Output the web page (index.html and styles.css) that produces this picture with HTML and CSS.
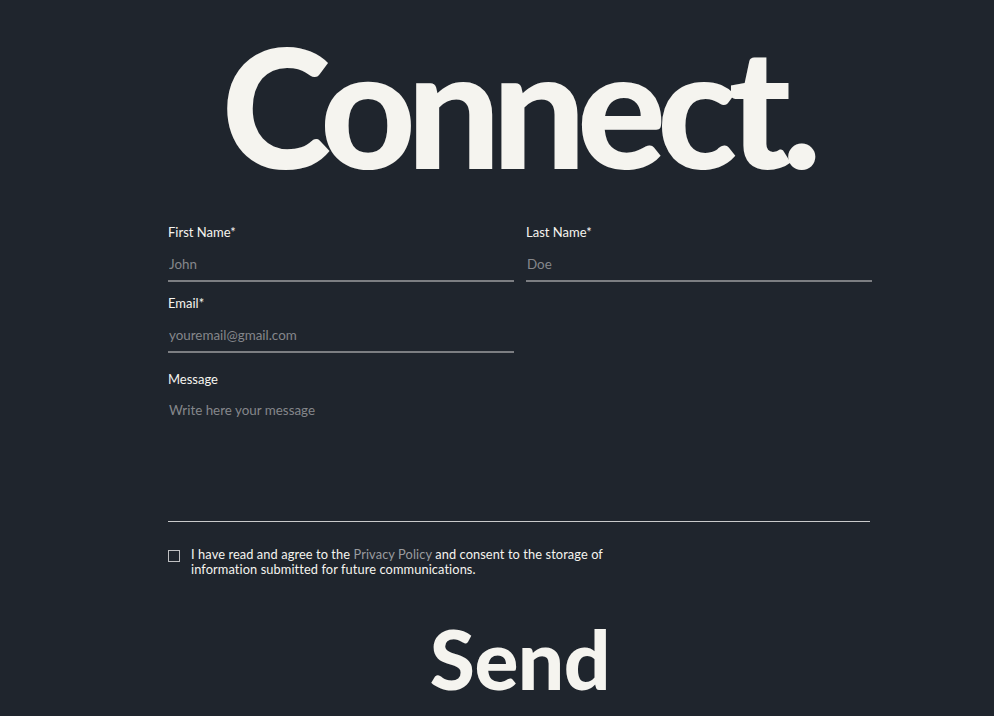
FILE: index.html
```html
<!DOCTYPE html>
<html lang="en">
<head>
<meta charset="utf-8">
<title>Connect</title>
<link rel="stylesheet" href="styles.css">
</head>
<body>
<main class="page">
  <h1 class="title">Connect.</h1>
  <form class="form">
    <div class="row">
      <label class="field">
        <span class="label">First Name*</span>
        <input class="input" type="text" placeholder="John">
      </label>
      <label class="field">
        <span class="label">Last Name*</span>
        <input class="input" type="text" placeholder="Doe">
      </label>
    </div>
    <div class="row">
      <label class="field">
        <span class="label">Email*</span>
        <input class="input" type="email" placeholder="youremail@gmail.com">
      </label>
      <div class="field"></div>
    </div>
    <label class="field message">
      <span class="label">Message</span>
      <textarea class="textarea" placeholder="Write here your message"></textarea>
    </label>
    <label class="consent">
      <span class="box"></span>
      <span class="consent-text">I have read and agree to the <span class="link">Privacy Policy</span> and consent to the storage of information submitted for future communications.</span>
    </label>
    <div class="send-wrap"><button class="send" type="button">Send</button></div>
  </form>
</main>
</body>
</html>
```
FILE: styles.css
```css
html, body {
  margin: 0;
  padding: 0;
  background: #1f252d;
  height: 100%;
  overflow: hidden;
}
body {
  font-family: "Lato", "Noto Sans", sans-serif;
  color: #f5f4ef;
}
.page {
  width: 704px;
  margin-left: 168px;
  padding-top: 17px;
}
.title {
  margin: 0;
  text-align: center;
  font-weight: 900;
  font-size: 166px;
  line-height: 175px;
  letter-spacing: -9px;
  text-indent: -6px;
  color: #f5f4ef;
  white-space: nowrap;
}
.form {
  display: flex;
  flex-direction: column;
  margin-top: 32px;
}
.row {
  display: grid;
  grid-template-columns: 346px 346px;
  column-gap: 12px;
  margin-bottom: 13px;
}
.field {
  display: flex;
  flex-direction: column;
}
.label {
  font-size: 13px;
  line-height: 16px;
  color: #f5f4ef;
}
.input, .textarea {
  background: transparent;
  border: none;
  border-bottom: 2px solid #7c7e82;
  color: #f5f4ef;
  font-family: inherit;
  font-size: 13.4px;
  padding: 16px 0 8px 1px;
  margin: 0;
  outline: none;
  line-height: 16px;
}
.input::placeholder, .textarea::placeholder {
  color: #85878b;
}
.message {
  width: 702px;
  margin-top: 5px;
}
.textarea {
  resize: none;
  border-bottom: 1px solid #c9cacb;
  padding-top: 15px;
  box-sizing: border-box;
  height: 135px;
}
.consent {
  display: flex;
  align-items: flex-start;
  gap: 11px;
  margin-top: 25px;
  width: 470px;
}
.box {
  flex: none;
  width: 10px;
  height: 10px;
  border: 1px solid #bfc0c2;
  margin-top: 3px;
}
.consent-text {
  font-size: 12.8px;
  line-height: 15px;
  color: #f5f4ef;
  letter-spacing: 0.1px;
}
.link {
  color: #9a9c9f;
}
.send-wrap {
  display: flex;
  justify-content: center;
  margin-top: 36px;
}
.send {
  background: none;
  border: none;
  padding: 0;
  font-family: inherit;
  font-weight: 900;
  font-size: 82px;
  line-height: 90px;
  letter-spacing: -0.5px;
  color: #f5f4ef;
  cursor: pointer;
}
```
